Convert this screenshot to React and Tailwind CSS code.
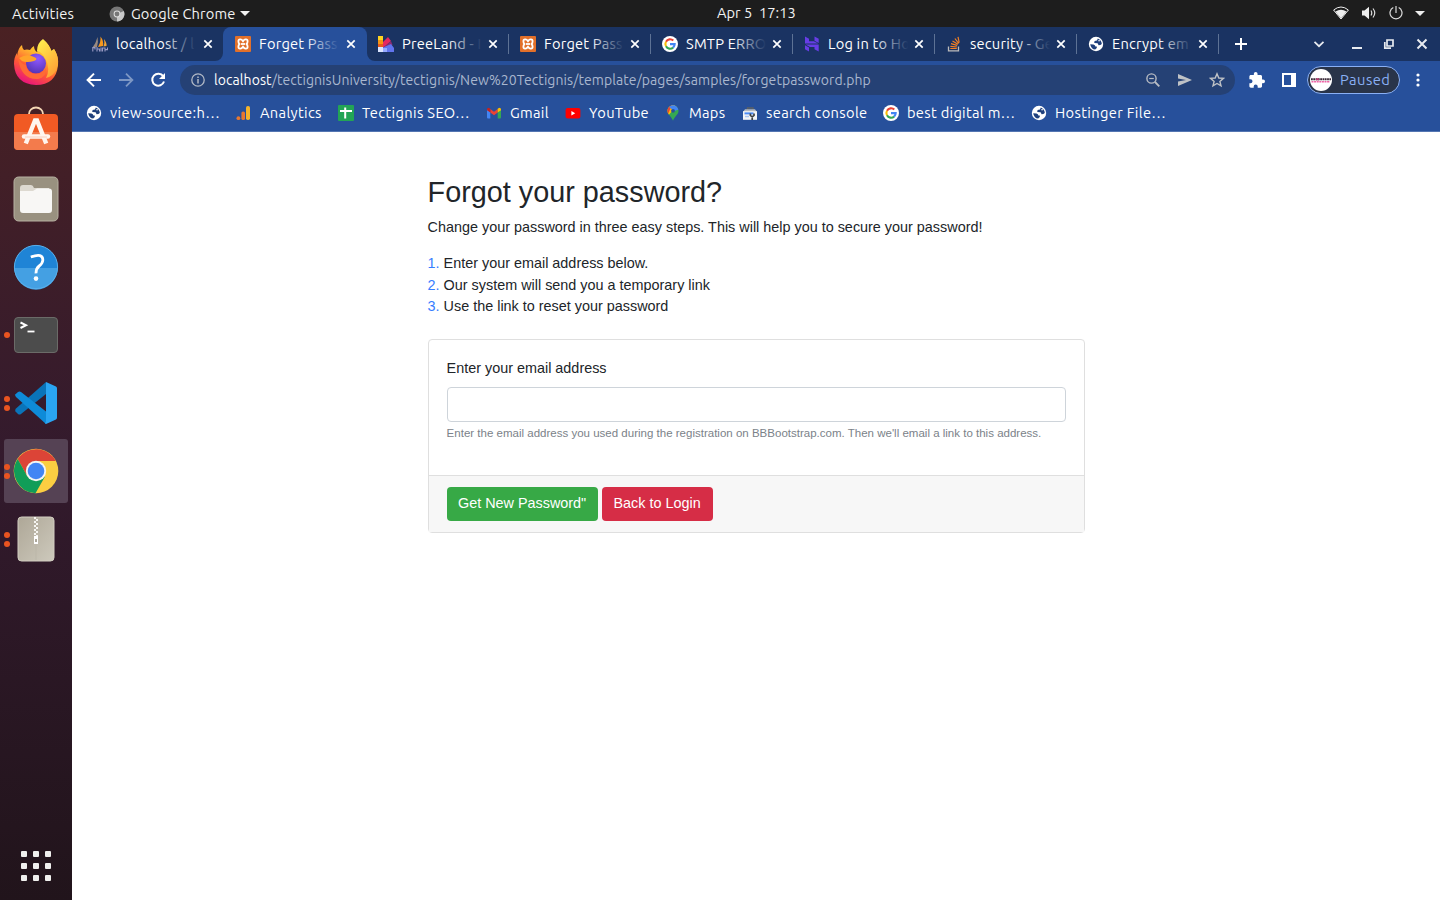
import React from "react";

const UI = "font-['Ubuntu','Noto_Sans',sans-serif]";

function Globe() {
  return (
    <svg width="16" height="16" viewBox="0 0 16 16" className="block shrink-0">
      <circle cx="8" cy="8" r="7.2" fill="#fff" />
      <path d="M2.2 8.2 L5.5 8.4 Q7.2 8.8 7.4 10.4 L8.8 10.6 L8.8 12 L7.2 13.6 Q3 13.2 2.2 8.2Z" fill="#1e3f7c" />
      <path d="M9.8 2.4 L9 4.4 L6.6 5 L6.2 7 L9.6 7.2 L10.6 9.2 L12.4 9 L13.8 8 Q13.6 4 9.8 2.4Z" fill="#1e3f7c" />
      <path d="M10.2 4.2 H12 V5.2 H10.2Z" fill="#fff" />
    </svg>
  );
}

function GoogleG() {
  return (
    <svg width="16" height="16" viewBox="0 0 16 16" className="block shrink-0">
      <circle cx="8" cy="8" r="8" fill="#fff" />
      <g fill="none" strokeWidth="2.1">
        <path d="M4 5.7 A4.7 4.7 0 0 1 11.3 4.6" stroke="#ea4335" />
        <path d="M4 10.3 A4.7 4.7 0 0 1 4 5.7" stroke="#fbbc05" />
        <path d="M11.1 11.6 A4.7 4.7 0 0 1 4 10.3" stroke="#34a853" />
        <path d="M8 8.1 H12.7 A4.7 4.7 0 0 1 11.1 11.6" stroke="#4285f4" />
      </g>
    </svg>
  );
}

function Xampp() {
  return (
    <svg width="16" height="16" viewBox="0 0 16 16" className="block shrink-0">
      <rect width="16" height="16" rx="1" fill="#e2702a" />
      <path d="M5 3.4 H5.4 Q6.8 3.4 8 5.2 Q9.2 3.4 10.6 3.4 H11 Q12.6 3.4 12.6 5.2 Q12.6 7 11.6 8 Q12.6 9 12.6 10.8 Q12.6 12.6 11 12.6 H10.6 Q9.2 12.6 8 10.8 Q6.8 12.6 5.4 12.6 H5 Q3.4 12.6 3.4 10.8 Q3.4 9 4.4 8 Q3.4 7 3.4 5.2 Q3.4 3.4 5 3.4Z" fill="none" stroke="#fff" strokeWidth="1.8" />
      <path d="M6 8 H10" stroke="#fff" strokeWidth="1.8" />
    </svg>
  );
}

function PhpMyAdmin() {
  return (
    <svg width="16" height="16" viewBox="0 0 16 16" className="block shrink-0">
      <path d="M5.5 1 Q6.5 5 5 11 L0.5 11.5 Q4 7 5.5 1Z" fill="#9a8a80" />
      <path d="M8.5 .5 Q12 5 11 10 L6 11 Q9 6 8.5 .5Z" fill="#f8981d" />
      <path d="M12 3 Q15 7 14.5 10 L11.5 10.5 Q13 7 12 3Z" fill="#f4a536" />
      <path d="M0.5 11.6 H3 V13.6 M5 11 V15.5 M5 13 H7.5 V15.5 M9 11.5 V15.5 M10.5 15.5 V12 H13 V15.5 M13 13.6 H15.5 V11.5 M.8 11 V15.5" fill="none" stroke="#9a9ac4" strokeWidth="1.1" />
    </svg>
  );
}

function Swatches() {
  return (
    <svg width="16" height="16" viewBox="0 0 16 16" className="block shrink-0">
      <path d="M0 0 H5 V5 H0Z" fill="#ffd21f" /><path d="M0 4 H5 V8 H0Z" fill="#f49414" />
      <path d="M0 8 H5 V12 H0Z" fill="#e95b1b" /><path d="M5 6 L10 1 L13 5 L5 12Z" fill="#e52860" />
      <path d="M5 12 L13 5 L14.5 9 L5 14Z" fill="#8a2c74" /><path d="M4 12 L13 8 L16 12 V16 H4Z" fill="#6174ee" />
      <path d="M0 11 H5 V16 H0Z" fill="#dbe4ff" /><path d="M5 12 H9 V16 H5Z" fill="#94a9ff" />
    </svg>
  );
}

function Hostinger() {
  return (
    <svg width="16" height="16" viewBox="0 0 16 16" className="block shrink-0" fill="#673de6">
      <path d="M1 .5 L5 2.8 V5.3 H9.8 L14.2 7.6 H1Z" />
      <path d="M10.5 .5 L14.7 2.8 V7 L10.5 4.8Z" />
      <path d="M1.6 8.6 H14.7 V15.5 L10.5 13.2 V11 H6Z" />
      <path d="M1 9.2 L5 11.4 V15.5 L1 13.3Z" />
    </svg>
  );
}

function StackOverflow() {
  return (
    <svg width="16" height="16" viewBox="0 0 16 16" className="block shrink-0" fill="none">
      <path d="M2.5 10.5 V14.8 H12.5 V10.5" stroke="#bcbbbb" strokeWidth="1.3" />
      <path d="M4.3 12.5 H10.8 M4.4 10.3 L10.9 11 M5 7.7 L11.2 9.4 M6.5 4.9 L12 8.2 M8.9 2.5 L12.7 7.4 M12 .8 L13.2 6.6" stroke="#f48024" strokeWidth="1.2" />
    </svg>
  );
}

function Analytics() {
  return (
    <svg width="16" height="16" viewBox="0 0 16 16" className="block shrink-0">
      <rect x="10" y="1" width="4" height="14" rx="1.8" fill="#f5b32b" />
      <rect x="5.4" y="6.5" width="3.6" height="8.5" rx="1.6" fill="#e8772e" />
      <circle cx="2.4" cy="13.2" r="1.9" fill="#e8772e" />
    </svg>
  );
}

function Sheets() {
  return (
    <svg width="16" height="16" viewBox="0 0 16 16" className="block shrink-0">
      <rect width="16" height="16" rx="1" fill="#23a455" />
      <path d="M2 6 H14 M7.2 2.5 V13.5" stroke="#fff" strokeWidth="2" />
    </svg>
  );
}

function Gmail() {
  return (
    <svg width="16" height="16" viewBox="0 0 16 16" className="block shrink-0">
      <path d="M1 4 L4.3 6.3 V13.5 H2 Q1 13.5 1 12.5Z" fill="#4285f4" />
      <path d="M15 4 L11.7 6.3 V13.5 H14 Q15 13.5 15 12.5Z" fill="#34a853" />
      <path d="M4.3 4 L8 6.8 L11.7 4 V7.5 L8 10.3 L4.3 7.5Z" fill="#ea4335" />
      <path d="M1 4.3 Q1.4 1.8 3.6 3.2 L4.3 3.8 V7.5 L1 5.2Z" fill="#c5221f" />
      <path d="M15 4.3 Q14.6 1.8 12.4 3.2 L11.7 3.8 V7.5 L15 5.2Z" fill="#fbbc04" />
    </svg>
  );
}

function YouTube() {
  return (
    <svg width="16" height="16" viewBox="0 0 16 16" className="block shrink-0">
      <rect x=".6" y="3" width="14.8" height="10.4" rx="2" fill="#f00" />
      <path d="M6.4 6 L10.2 8.2 L6.4 10.4Z" fill="#fff" />
    </svg>
  );
}

function MapPin() {
  return (
    <svg width="16" height="16" viewBox="0 0 16 16" className="block shrink-0">
      <defs>
        <clipPath id="pin"><path d="M8 .3 C11 .3 13.5 2.8 13.5 5.9 C13.5 9.8 9.4 11 8 15.8 C6.6 11 2.5 9.8 2.5 5.9 C2.5 2.8 5 .3 8 .3Z" /></clipPath>
      </defs>
      <g clipPath="url(#pin)">
        <rect width="16" height="16" fill="#34a853" />
        <path d="M0 14 L13 0 H0Z" fill="#fbbc04" />
        <path d="M0 0 H7 L3 9 H0Z" fill="#ea4335" />
        <path d="M4 2 L6 0 H16 V4 L9 6Z" fill="#4285f4" />
      </g>
      <circle cx="8" cy="5.8" r="1.9" fill="#27509b" />
    </svg>
  );
}

function SearchConsole() {
  return (
    <svg width="16" height="16" viewBox="0 0 16 16" className="block shrink-0">
      <path d="M5.5 5 V3 H11 V5" stroke="#5d6063" strokeWidth="1.4" fill="none" />
      <path d="M3 4.2 H13 L15 7 H1Z" fill="#b5b9bd" />
      <rect x="1" y="6.2" width="14" height="8.6" fill="#f3f5f7" />
      <rect x="2.5" y="7.4" width="9" height="2" fill="#4b8bf5" />
      <path d="M3 11.5 H7" stroke="#a8c5f2" strokeWidth="1.5" />
      <path d="M8.4 8.6 V10.4 L10.2 11.8 L12 10.4 V8.6 M10.2 11.5 V15" stroke="#3c4043" strokeWidth="1.7" fill="none" />
    </svg>
  );
}

const tabs = [
  { icon: PhpMyAdmin, title: "localhost / l", first: true },
  { icon: Xampp, title: "Forget Pass", active: true },
  { icon: Swatches, title: "PreeLand - I" },
  { icon: Xampp, title: "Forget Pass" },
  { icon: GoogleG, title: "SMTP ERRO" },
  { icon: Hostinger, title: "Log in to Ho" },
  { icon: StackOverflow, title: "security - Ge" },
  { icon: Globe, title: "Encrypt em" },
];

function Tab({ icon: Icon, title, active, first }) {
  const size = active ? "w-[144px] bg-[#27509b] rounded-t-lg pl-3" : first ? "w-[143px] pl-3" : "w-[142px] pl-[11px]";
  const fade = active ? "to-[#27509b]" : "to-[#1a3362]";
  return (
    <div className={`relative flex h-[34px] shrink-0 items-center ${size}`}>
      {active && (
        <>
          <svg width="8" height="8" viewBox="0 0 8 8" className="absolute bottom-0 -left-2"><path d="M8 0 V8 H0 A8 8 0 0 0 8 0Z" fill="#27509b" /></svg>
          <svg width="8" height="8" viewBox="0 0 8 8" className="absolute bottom-0 -right-2"><path d="M0 0 V8 H8 A8 8 0 0 1 0 0Z" fill="#27509b" /></svg>
        </>
      )}
      <Icon />
      <div className="relative ml-2 h-5 w-[80px] whitespace-nowrap text-[14.67px] leading-5 tracking-[0.2px] text-white">
        {title}
        <span className={`absolute inset-y-0 -right-1 w-[38px] bg-linear-to-r from-transparent to-90% ${fade}`} />
      </div>
      <svg width="10" height="10" viewBox="0 0 10 10" className={`relative shrink-0 ${active || first ? "ml-[7px]" : "ml-[6px]"}`}>
        <path d="M1.3 1.3 L8.7 8.7 M8.7 1.3 L1.3 8.7" stroke="#fff" strokeWidth="1.7" />
      </svg>
      {!active && !first && <span className="absolute right-0 top-[7px] h-5 w-px bg-[#5d7295]" />}
    </div>
  );
}

const bookmarks = [
  { icon: Globe, text: "view-source:h…", w: "w-[111px]", t: "tracking-[0.4px]" },
  { icon: Analytics, text: "Analytics", w: "w-[62px]", t: "tracking-[0.32px]" },
  { icon: Sheets, text: "Tectignis SEO…", w: "w-[108px]", t: "tracking-[0.36px]" },
  { icon: Gmail, text: "Gmail", w: "w-[39px]", t: "tracking-[0.3px]" },
  { icon: YouTube, text: "YouTube", w: "w-[60px]", t: "tracking-[0.36px]" },
  { icon: MapPin, text: "Maps", w: "w-[37px]", t: "tracking-[0.3px]" },
  { icon: SearchConsole, text: "search console", w: "w-[101px]", t: "tracking-[0.35px]" },
  { icon: GoogleG, text: "best digital m…", w: "w-[108px]", t: "tracking-[0.3px]" },
  { icon: Globe, text: "Hostinger File…", w: "w-[112px]", t: "tracking-[0.35px]" },
];

function Firefox() {
  return (
    <svg width="46" height="48" viewBox="0 0 46 48" className="mb-[2px]">
      <defs>
        <linearGradient id="ffb" x1=".8" y1="0" x2=".3" y2="1">
          <stop offset="0" stopColor="#fff14a" /><stop offset=".35" stopColor="#ffb92e" />
          <stop offset=".65" stopColor="#ff5b34" /><stop offset="1" stopColor="#e8117f" />
        </linearGradient>
        <linearGradient id="fft" x1="0" y1="0" x2=".6" y2="1">
          <stop offset="0" stopColor="#fff44f" /><stop offset="1" stopColor="#ffa436" />
        </linearGradient>
        <radialGradient id="ffg" cx=".6" cy=".25" r=".9">
          <stop offset="0" stopColor="#9059ff" /><stop offset="1" stopColor="#4a2ea8" />
        </radialGradient>
      </defs>
      <path d="M9 7 Q9 10 11 12 Q14 11 17 12 Q19 9 21 8 Q21 12 24 14 L30 2 Q37 7 38 13 L41 11 Q46 19 45 27 Q43 47 23 47 Q2 46 1 26 Q1 19 4 15 L4 18 Q5 10 9 7Z" fill="url(#ffb)" />
      <path d="M30 1 Q36 6 39 14 L41 11 Q47 20 44 30 Q41 38 33 40 Q38 30 32 20 Q29 14 24 13 Q24 5 30 1Z" fill="url(#fft)" />
      <circle cx="23" cy="25.5" r="10" fill="url(#ffg)" />
      <path d="M5 20 Q9 27 13 27 Q14 34 20 35.5 Q29 37 33 30 Q34 39 25 41 Q8 42 5 20Z" fill="#ff6a35" />
      <path d="M6 20 Q14 15 21 19 Q26 21 21 23 Q14 25 9 23Z" fill="#ffa42a" />
    </svg>
  );
}

function Software() {
  return (
    <svg width="46" height="46" viewBox="0 0 46 46" className="mb-[5px]">
      <path d="M16 10 V8 A7 6.5 0 0 1 30 8 V10" fill="none" stroke="#f5d7b5" strokeWidth="1.8" />
      <rect x="1" y="8" width="44" height="36" rx="4" fill="#f15a24" />
      <path d="M1 26 H45 V40 Q45 44 41 44 H5 Q1 44 1 40Z" fill="#f37b4c" />
      <g stroke="#fff5ee" fill="none">
        <path d="M12.8 37.5 L22 14.5 H24 L33.2 37.5" strokeWidth="4.4" />
        <path d="M11 30.5 H35" strokeWidth="4.4" strokeLinecap="round" />
      </g>
      <path d="M12 31 H34" stroke="#f9c3ad" strokeWidth=".8" />
    </svg>
  );
}

function Files() {
  return (
    <svg width="46" height="46" viewBox="0 0 46 46">
      <rect x="1" y="1" width="44" height="44" rx="4.5" fill="#999180" stroke="#b7b1a2" />
      <path d="M7 14 V12 Q7 9 10 9 H18 Q20 9 21 12 H36 V20 H7Z" fill="#ddd9d0" />
      <path d="M7 15 H20 L24 12.5 H36 Q39 12.5 39 15.5 V34 Q39 37 36 37 H10 Q7 37 7 34Z" fill="#f8f7f5" />
    </svg>
  );
}

function Help() {
  return (
    <svg width="46" height="46" viewBox="0 0 46 46">
      <circle cx="23" cy="23" r="21.7" fill="#1f84d6" />
      <path d="M1.3 24 H44.7 A21.7 21.7 0 0 1 1.3 24Z" fill="#44a0e3" />
      <circle cx="23" cy="23" r="21.6" fill="none" stroke="#58b0ec" />
      <path d="M17.8 13 Q30.2 8.5 29.8 16.3 Q29.6 19.5 26.2 22 Q22.9 24.5 23 29.4" fill="none" stroke="#fff" strokeWidth="2.8" />
      <circle cx="23" cy="34.6" r="2.3" fill="#fff" />
    </svg>
  );
}

function Terminal() {
  return (
    <svg width="46" height="46" viewBox="0 0 46 46">
      <rect x="1.5" y="5.5" width="43" height="35" rx="3.5" fill="#4c4c4c" stroke="#6b6b68" />
      <path d="M7.5 10.5 L13 13.2 L7.5 16" fill="none" stroke="#fff" strokeWidth="2" />
      <path d="M14.5 19.5 H21.5" stroke="#fff" strokeWidth="1.8" />
    </svg>
  );
}

function VSCode() {
  return (
    <svg width="46" height="46" viewBox="0 0 46 46">
      <path d="M33 2 V14 L8 34 Q6.5 35 5 34 L2.5 31.5 Q1.5 30 3 28.5Z" fill="#0a74b9" />
      <path d="M33 44 V31.5 L8 12 Q6.5 11 5 12 L2.5 14.3 Q1.5 15.5 3 17Z" fill="#0e8bd8" />
      <path d="M33 2 L43 6.5 Q44 7 44 8.5 V37.5 Q44 39 43 39.5 L33 44 Q31.5 43.5 33 41.5Z" fill="#2aa5f2" />
    </svg>
  );
}

function Chrome() {
  return (
    <svg width="46" height="46" viewBox="0 0 46 46">
      <circle cx="23" cy="23" r="22.3" fill="#fbce42" />
      <path d="M4.7 11 A22.3 22.3 0 0 1 42.8 13 H23 L14.3 28.2Z" fill="#dc4437" />
      <path d="M4.7 11 A22.3 22.3 0 0 0 22.5 45.3 L32 28.5 L23 33 L14.3 28.2Z" fill="#119d58" />
      <circle cx="23" cy="23" r="10.2" fill="#f4f4f4" />
      <circle cx="23" cy="23" r="8.3" fill="#4285f4" />
    </svg>
  );
}

function Archive() {
  return (
    <svg width="46" height="46" viewBox="0 0 46 46">
      <defs>
        <linearGradient id="zip" x1="0" y1="0" x2="1" y2="1"><stop offset="0" stopColor="#aea797" /><stop offset="1" stopColor="#cdc9bc" /></linearGradient>
      </defs>
      <rect x="5" y="1" width="36" height="44" rx="3.5" fill="url(#zip)" stroke="#d2cdc1" />
      <path d="M23 28 V44" stroke="#b9b4a7" strokeWidth=".7" />
      <path d="M22 1 V21" stroke="#f6f5f1" strokeWidth="2" strokeDasharray="2 2" />
      <path d="M24 3 V21" stroke="#f6f5f1" strokeWidth="2" strokeDasharray="2 2" />
      <path d="M21 20 H25 V28 H21Z" fill="#fff" /><path d="M22.2 23 H23.8 V26 H22.2Z" fill="#9a9484" />
    </svg>
  );
}

const dock = [
  { icon: Firefox, dots: 0 }, { icon: Software, dots: 0 }, { icon: Files, dots: 0 }, { icon: Help, dots: 0 },
  { icon: Terminal, dots: 1 }, { icon: VSCode, dots: 2 }, { icon: Chrome, dots: 2, active: true }, { icon: Archive, dots: 2 },
];

function TopBar() {
  return (
    <header className="flex h-[27px] items-center bg-[#1d1d1d] text-[14.67px] leading-5 text-[#f2f2f2]">
      <div className="flex w-[717px] shrink-0 items-center pl-3">
        <span className="w-[97px] tracking-[0.2px]">Activities</span>
        <svg width="16" height="16" viewBox="0 0 16 16" className="shrink-0">
          <circle cx="8" cy="8" r="7.5" fill="#777" />
          <path d="M8 8 L14.8 5 A7.5 7.5 0 0 1 8 15.5Z" fill="#c8c8c8" />
          <circle cx="8" cy="8" r="3.4" fill="#ddd" /><circle cx="8" cy="8" r="2.4" fill="#777" />
        </svg>
        <span className="ml-[6px] w-[109px] tracking-[0.13px]">Google Chrome</span>
        <svg width="10" height="5" viewBox="0 0 10 5"><path d="M0 0 H10 L5 5Z" fill="#f2f2f2" /></svg>
      </div>
      <div className="whitespace-pre pb-px">Apr 5  17:13</div>
      <div className="flex flex-1 items-center justify-end pb-px pr-[15px]">
        <svg width="16" height="14" viewBox="0 0 16 14"><path d="M.6 4 Q8 -2 15.4 4 L8 13Z" fill="none" stroke="#eee" strokeWidth="1" /><path d="M2.5 5.6 Q8 1.8 13.5 5.6 L8 12.6Z" fill="#eee" /></svg>
        <svg width="16" height="14" viewBox="0 0 16 14" className="ml-3"><path d="M1 4.5 H3.5 L8 .8 V13.2 L3.5 9.5 H1Z" fill="#eee" /><path d="M10 4.5 Q11.5 7 10 9.5 M12 2.5 Q15.5 7 12 11.5" stroke="#ddd" strokeWidth="1.2" fill="none" /></svg>
        <svg width="14" height="14" viewBox="0 0 14 14" className="ml-[12px]"><path d="M4.3 1.5 A6 6 0 1 0 9.7 1.5 M7 0 V7" stroke="#ddd" strokeWidth="1.2" fill="none" /></svg>
        <svg width="10" height="5" viewBox="0 0 10 5" className="ml-[12px]"><path d="M0 0 H10 L5 5Z" fill="#eee" /></svg>
      </div>
    </header>
  );
}

function Dock() {
  return (
    <aside className="flex w-[72px] shrink-0 flex-col items-center justify-between bg-linear-to-b from-[#4a2123] via-[#331a2d] via-50% to-[#21141b] pt-1 pb-[19px]">
      <div className="flex flex-col gap-1">
        {dock.map(({ icon: Icon, dots, active }, i) => (
          <div key={i} className={`relative flex h-16 w-16 items-center justify-center rounded-[3px] ${active ? "bg-[#554254]" : ""}`}>
            <Icon />
            {dots > 0 && (
              <div className="absolute inset-y-0 left-0 flex flex-col items-center justify-center gap-[3px]">
                {Array.from({ length: dots }, (_, k) => <span key={k} className="size-[6px] rounded-full bg-[#e95420]" />)}
              </div>
            )}
          </div>
        ))}
      </div>
      <div className="grid grid-cols-3 gap-[6px]">
        {Array.from({ length: 9 }, (_, i) => <span key={i} className="size-[6px] rounded-[1px] bg-[#f0f0ee]" />)}
      </div>
    </aside>
  );
}

function TabStrip() {
  return (
    <div className="flex h-[34px] items-center bg-[#1a3362] pl-2">
      {tabs.map((t, i) => <Tab key={i} {...t} />)}
      <svg width="14" height="14" viewBox="0 0 14 14" className="ml-[15px] shrink-0"><path d="M1 7 H13 M7 1 V13" stroke="#fff" strokeWidth="2" /></svg>
      <div className="ml-auto flex items-center pr-[12px]">
        <svg width="12" height="12" viewBox="0 0 12 12"><path d="M1.5 3.8 L6 8.2 L10.5 3.8" fill="none" stroke="#e8ebf0" strokeWidth="1.7" /></svg>
        <svg width="12" height="12" viewBox="0 0 12 12" className="ml-[26px]"><path d="M1 10 H11" stroke="#e8ebf0" strokeWidth="2" /></svg>
        <svg width="12" height="12" viewBox="0 0 12 12" className="ml-[20px]"><path d="M4 2 H10 V8 H4Z M1.8 4 V10.2 H8" fill="none" stroke="#e8ebf0" strokeWidth="1.7" /></svg>
        <svg width="12" height="12" viewBox="0 0 12 12" className="ml-[21px]"><path d="M1.5 1.5 L10.5 10.5 M10.5 1.5 L1.5 10.5" stroke="#e8ebf0" strokeWidth="2" /></svg>
      </div>
    </div>
  );
}

function Toolbar() {
  return (
    <div className="flex h-[38px] items-center bg-[#27509b] pl-[14px] pr-[13px]">
      <svg width="16" height="16" viewBox="0 0 16 16" className="shrink-0"><path d="M15 8 H2 M8 1.6 L1.6 8 L8 14.4" fill="none" stroke="#fff" strokeWidth="2" /></svg>
      <svg width="16" height="16" viewBox="0 0 16 16" className="ml-4 shrink-0"><path d="M1 8 H14 M8 1.6 L14.4 8 L8 14.4" fill="none" stroke="#7d97c4" strokeWidth="1.8" /></svg>
      <svg width="16" height="16" viewBox="0 0 16 16" className="ml-4 shrink-0"><path d="M13.2 4.2 A6 6 0 1 0 14 9.5" fill="none" stroke="#fff" strokeWidth="2" /><path d="M15 1 V7 H9Z" fill="#fff" /></svg>
      <div className="ml-[14px] flex h-[30px] w-[1055px] shrink-0 items-center rounded-full bg-[#254175] pl-[11px] pr-[10px]">
        <svg width="14" height="14" viewBox="0 0 14 14" className="shrink-0" fill="none" stroke="#b2b9c6"><circle cx="7" cy="7" r="6.2" strokeWidth="1.3" /><path d="M7 6 V10.5 M7 3.4 V5" strokeWidth="1.5" /></svg>
        <div className="ml-[9px] flex-1 whitespace-nowrap text-[14px] leading-5 tracking-[0.08px] text-[#a9b7cf]"><span className="text-white">localhost</span>/tectignisUniversity/tectignis/New%20Tectignis/template/pages/samples/forgetpassword.php</div>
        <svg width="14" height="14" viewBox="0 0 14 14" fill="none" stroke="#b8bcc4"><circle cx="5.5" cy="5.5" r="4.6" strokeWidth="1.4" /><path d="M9 9 L13.3 13.3" strokeWidth="1.8" /><path d="M3.2 5.5 H7.8" strokeWidth="1.2" /></svg>
        <svg width="14" height="12" viewBox="0 0 14 12" className="ml-[18px]" fill="#bfc2c6"><path d="M0 0 L14 6 L0 12 V7.5 L8 6 L0 4.5Z" /></svg>
        <svg width="16" height="16" viewBox="0 0 16 16" className="ml-[17px]"><path d="M8 1.8 L9.8 6 L14.4 6.4 L10.9 9.4 L12 13.9 L8 11.5 L4 13.9 L5.1 9.4 L1.6 6.4 L6.2 6Z" fill="none" stroke="#bfc2c6" strokeWidth="1.4" /></svg>
      </div>
      <svg width="16" height="16" viewBox="1.5 1 21.5 21.5" className="ml-[14px] mr-px shrink-0"><path fill="#fff" d="M20.5 11H19V7c0-1.1-.9-2-2-2h-4V3.5a2.5 2.5 0 0 0-5 0V5H4c-1.1 0-2 .9-2 2v3.8h1.5a2.7 2.7 0 0 1 0 5.4H2V20c0 1.1.9 2 2 2h3.8v-1.5a2.7 2.7 0 0 1 5.4 0V22H17c1.1 0 2-.9 2-2v-4h1.5a2.5 2.5 0 0 0 0-5z" /></svg>
      <svg width="14" height="14" viewBox="0 0 14 14" className="ml-[16px] shrink-0"><path d="M0 0 H14 V14 H0Z M2 2 V12 H9 V2Z" fill="#fff" fillRule="evenodd" /></svg>
      <div className="ml-[11px] flex h-7 w-[93px] shrink-0 items-center rounded-full border border-[#8ab0f5] bg-[#293449] pl-[2px]">
        <svg width="22" height="22" viewBox="0 0 22 22" className="shrink-0">
          <circle cx="11" cy="11" r="11" fill="#fff" />
          <path d="M1 10.3 H21" stroke="#3a2a38" strokeWidth="2" strokeDasharray="1.8 .5" /><path d="M6 10.3 H9" stroke="#b0386f" strokeWidth="2" />
          <path d="M1.5 12.7 H20" stroke="#ee64a6" strokeWidth="1.4" strokeDasharray="2 .6" />
        </svg>
        <span className="ml-2 text-[14.67px] leading-5 tracking-[0.45px] text-[#8ab0f5]">Paused</span>
      </div>
      <svg width="4" height="14" viewBox="0 0 4 14" className="ml-auto mr-[7px] shrink-0" fill="#fff"><circle cx="2" cy="2" r="1.6" /><circle cx="2" cy="7" r="1.6" /><circle cx="2" cy="12" r="1.6" /></svg>
    </div>
  );
}

function Bookmarks() {
  return (
    <div className="flex h-[33px] items-center gap-4 border-b border-[#5476b2] bg-[#27509b] pb-[4px] pl-[14px]">
      {bookmarks.map(({ icon: Icon, text, w, t }, i) => (
        <div key={i} className={`flex shrink-0 items-center gap-2 ${i === 1 ? "-ml-px" : ""}`}>
          <Icon />
          <span className={`${w} ${t} whitespace-nowrap text-[14.67px] leading-5 text-white`}>{text}</span>
        </div>
      ))}
    </div>
  );
}

function Page() {
  return (
    <main className="flex-1 bg-white pl-[355.6px] pt-[43px] font-['Liberation_Sans',Arial,sans-serif] text-[14.4px] leading-[21.6px] text-[#212529]">
      <div className="w-[657px]">
        <h2 className="mb-[7px] text-[28.8px] leading-[34.5px]">Forgot your password?</h2>
        <p className="mb-[15.1px]">Change your password in three easy steps. This will help you to secure your password!</p>
        <ol>
          <li><span className="text-[#377dff]">1. </span>Enter your email address below.</li>
          <li><span className="text-[#377dff]">2. </span>Our system will send you a temporary link</li>
          <li><span className="text-[#377dff]">3. </span>Use the link to reset your password</li>
        </ol>
        <form className="mt-[20.9px] rounded-[4px] border border-[#dfdfdf]">
          <div className="h-[135px] px-[18px] pt-[18px]">
            <label className="block">Enter your email address</label>
            <input className="mt-[7.2px] block h-[35px] w-full rounded-[4px] border border-[#ced4da] px-3 outline-none" />
            <small className="mt-[3px] block text-[11.52px] leading-[17.3px] text-[#7b8289]">Enter the email address you used during the registration on BBBootstrap.com. Then we'll email a link to this address.</small>
          </div>
          <div className="flex h-[57px] items-center gap-1 border-t border-[#dfdfdf] bg-[#f7f7f7] px-[18px]">
            <button type="button" className="h-[34px] w-[151px] rounded-[4px] bg-[#37a946] pb-px text-white">Get New Password"</button>
            <button type="button" className="h-[34px] w-[111px] rounded-[4px] bg-[#d62d46] pb-px text-white">Back to Login</button>
          </div>
        </form>
      </div>
    </main>
  );
}

export default function App() {
  return (
    <div className={`flex h-[900px] w-[1440px] flex-col overflow-hidden ${UI}`}>
      <TopBar />
      <div className="flex min-h-0 flex-1">
        <Dock />
        <div className="flex min-w-0 flex-1 flex-col">
          <TabStrip />
          <Toolbar />
          <Bookmarks />
          <Page />
        </div>
      </div>
    </div>
  );
}
